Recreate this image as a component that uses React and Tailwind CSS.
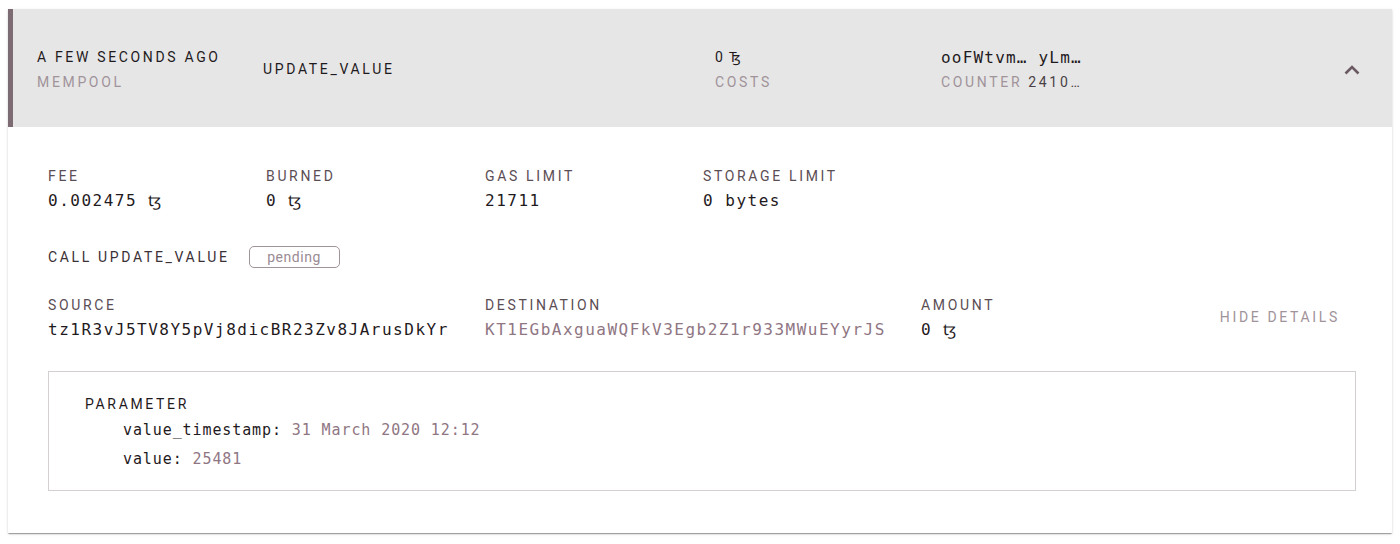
import React from 'react';

const sans = "font-['Roboto',_'Liberation_Sans',_sans-serif]";
const mono = "font-['DejaVu_Sans_Mono',_'Liberation_Mono',_monospace]";

function Field({ label, value, width, valueClass = 'text-[#1f1a1d]' }) {
  return (
    <div className={width}>
      <div className={`${sans} text-[14px] leading-5 tracking-[0.19em] uppercase text-[#5b4d54]`}>{label}</div>
      <div className={`${mono} mt-[3px] text-[16px] leading-6 tracking-[1.5px] ${valueClass}`}>{value}</div>
    </div>
  );
}

export default function App() {
  return (
    <div className="min-h-[544px] bg-white p-2 pt-[9px]">
      <div className="bg-white shadow-[0_2px_1px_-1px_rgba(0,0,0,0.2),0_1px_1px_0_rgba(0,0,0,0.14),0_1px_3px_0_rgba(0,0,0,0.12)]">
        {/* Header */}
        <div className="flex h-[118px] items-center border-l-[5px] border-[#7d6b74] bg-[#e6e6e6] pl-6 pr-[28px]">
          <div className="w-[226px] pt-[4px]">
            <div className={`${sans} text-[14px] leading-[25px] tracking-[0.19em] text-[#1f1a1d]`}>A FEW SECONDS AGO</div>
            <div className={`${sans} text-[14px] leading-[25px] tracking-[0.19em] text-[#a1939a]`}>MEMPOOL</div>
          </div>
          <div className={`${sans} w-[452px] pt-[3px] text-[14px] tracking-[0.19em] text-[#1f1a1d]`}>UPDATE_VALUE</div>
          <div className="w-[226px] pt-[4px]">
            <div className={`${sans} text-[14px] leading-[25px] tracking-[0.1em] text-[#1f1a1d]`}>0 Ꜩ</div>
            <div className={`${sans} text-[14px] leading-[25px] tracking-[0.19em] text-[#a1939a]`}>COSTS</div>
          </div>
          <div className="flex-1 pt-[4px]">
            <div className={`${mono} text-[16px] leading-[25px] tracking-[1.2px] text-[#1f1a1d]`}>ooFWtvm… yLm…</div>
            <div className={`${sans} text-[14px] leading-[25px] tracking-[0.19em] text-[#a1939a]`}>
              COUNTER <span className="text-[#4a3f45]">2410…</span>
            </div>
          </div>
          <svg width="24" height="24" viewBox="0 0 24 24" className="mt-[3px]">
            <path d="M5.5 15.5L12 9l6.5 6.5" fill="none" stroke="#6b5a62" strokeWidth="2.6" />
          </svg>
        </div>

        {/* Body */}
        <div className="pl-10 pr-9 pt-[39px] pb-[42px]">
          <div className="flex">
            <Field width="w-[218px]" label="Fee" value="0.002475 ꜩ" />
            <Field width="w-[219px]" label="Burned" value="0 ꜩ" />
            <Field width="w-[218px]" label="Gas limit" value="21711" />
            <Field width="w-[218px]" label="Storage limit" value="0 bytes" />
          </div>

          <div className="mt-[33px] flex items-center gap-[19px]">
            <div className={`${sans} text-[14px] tracking-[0.19em] text-[#3a3035]`}>CALL UPDATE_VALUE</div>
            <div className={`${sans} flex h-[22px] w-[91px] items-center justify-center rounded-[5px] border border-[#a1939a] text-[14px] tracking-[0.04em] text-[#9a8b93]`}>
              pending
            </div>
          </div>

          <div className="mt-[27px] flex items-center">
            <Field width="w-[437px]" label="Source" value="tz1R3vJ5TV8Y5pVj8dicBR23Zv8JArusDkYr" />
            <Field width="w-[436px]" label="Destination" value="KT1EGbAxguaWQFkV3Egb2Z1r933MWuEYyrJS" valueClass="text-[#8f7683]" />
            <Field width="w-[200px]" label="Amount" value="0 ꜩ" />
            <button className={`${sans} ml-auto mb-[2px] h-9 px-4 text-[14px] tracking-[0.19em] text-[#a1939a]`}>HIDE DETAILS</button>
          </div>

          <div className="mt-[29px] border border-[#d4d0d2] pl-9 pt-[22px] pb-4">
            <div className={`${sans} text-[14px] leading-5 tracking-[0.19em] text-[#1f1a1d]`}>PARAMETER</div>
            <div className={`${mono} mt-[2px] pl-[38px] text-[15px] leading-[28px] tracking-[0.9px] text-[#1f1a1d]`}>
              value_timestamp: <span className="text-[#8f7683]">31 March 2020 12:12</span>
            </div>
            <div className={`${mono} pl-[38px] text-[15px] leading-[30px] tracking-[0.9px] text-[#1f1a1d]`}>
              value: <span className="text-[#8f7683]">25481</span>
            </div>
          </div>
        </div>
      </div>
    </div>
  );
}
